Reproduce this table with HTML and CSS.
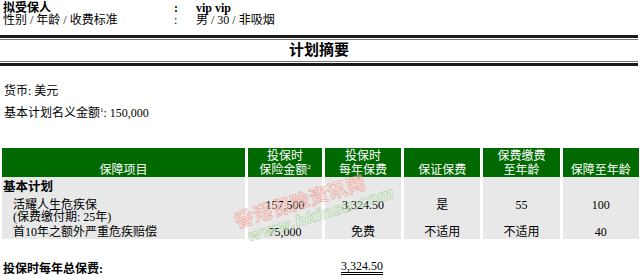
FILE: index.html
```html
<!DOCTYPE html>
<html lang="zh">
<head>
<meta charset="utf-8">
<link rel="stylesheet" href="styles.css">
</head>
<body>
<div class="page">
  <div class="insured">
    <div class="lbl strong">拟受保人</div><div class="colon strong">:</div><div class="val strong">vip vip</div>
    <div class="lbl">性别 / 年龄 / 收费标准</div><div class="colon">:</div><div class="val">男 / 30 / 非吸烟</div>
  </div>

  <div class="rule"><div class="rule-in"><h2 class="title">计划摘要</h2></div></div>

  <p class="line">货币: 美元</p>
  <p class="line">基本计划名义金额<sup class="fn">1</sup>: 150,000</p>

  <table class="plan">
    <colgroup>
      <col class="c1"><col class="c2"><col class="cn"><col class="cn"><col class="cn"><col class="cn">
    </colgroup>
    <thead>
      <tr>
        <th>保障项目</th>
        <th>投保时<br>保险金额<sup class="fn">2</sup></th>
        <th>投保时<br>每年保费</th>
        <th>保证保费</th>
        <th>保费缴费<br>至年龄</th>
        <th>保障至年龄</th>
      </tr>
    </thead>
    <tbody>
      <tr class="r1">
        <td class="name strong">基本计划</td><td></td><td></td><td></td><td></td><td></td>
      </tr>
      <tr class="r2">
        <td class="name sub">活耀人生危疾保<br>(保费缴付期: 25年)</td>
        <td>157,500</td><td>3,324.50</td><td>是</td><td>55</td><td>100</td>
      </tr>
      <tr class="r3">
        <td class="name sub">首10年之额外严重危疾赔偿</td>
        <td>75,000</td><td>免费</td><td>不适用</td><td>不适用</td><td>40</td>
      </tr>
    </tbody>
  </table>

  <div class="total">
    <span class="total-lbl strong">投保时每年总保费:</span>
    <span class="amt">3,324.50</span>
  </div>

  <div class="watermark">
    <div class="wm-cn">香港保险资讯网</div>
    <div class="wm-en">www.hkinsu.com</div>
  </div>
</div>
</body>
</html>
```
FILE: styles.css
```css
html, body {
  margin: 0;
  padding: 0;
  background: #fff;
}
body {
  font-family: "Liberation Serif", "Noto Sans CJK SC", serif;
  font-size: 12px;
  color: #000;
}
.page {
  position: relative;
  width: 641px;
  height: 280px;
  overflow: hidden;
  padding-top: 2px;
  box-sizing: border-box;
}
.strong { font-weight: bold; }

.insured {
  display: grid;
  grid-template-columns: 170px 23px auto;
  line-height: 12px;
  padding-left: 3px;
}
.colon { padding-left: 1px; }

.rule {
  margin-top: 9px;
  width: 638px;
  border-top: 3px solid #1a1a1a;
  border-bottom: 3px solid #1a1a1a;
  padding: 1px 0;
}
.rule-in {
  border-top: 1px solid #777;
  border-bottom: 1px solid #777;
}
.title {
  margin: 0;
  font-size: 15px;
  line-height: 21px;
  font-weight: bold;
  text-align: center;
}

.line {
  margin: 0;
  padding-left: 4px;
  line-height: 16px;
}
.line:first-of-type { margin-top: 17px; }
.line + .line { margin-top: 6px; }
.fn {
  font-size: 7px;
  line-height: 0;
  vertical-align: 5px;
}

.plan {
  margin-top: 27px;
  margin-left: -1px;
  border-collapse: separate;
  border-spacing: 3px 0;
  table-layout: fixed;
  width: 643px;
}
.c1 { width: 242px; }
.c2 { width: 74px; }
.cn { width: 76px; }
.plan th {
  background: #006900;
  color: #fff;
  font-weight: normal;
  height: 29px;
  line-height: 14px;
  padding: 1px 0 0;
  box-sizing: border-box;
  vertical-align: bottom;
  text-align: center;
  overflow: hidden;
}
.plan td {
  background: #e8e8e8;
  text-align: center;
  padding: 0;
  vertical-align: top;
}
.plan td.name { text-align: left; }
.r1 td { height: 20px; line-height: 20px; padding-left: 1px; }
.r1 td.name { font-size: 12.5px; }
.r2 td { height: 28px; line-height: 12px; padding-top: 2px; box-sizing: border-box; }
.r3 td { height: 14px; line-height: 14px; }
.plan td.sub { padding-left: 11px; }

.total {
  display: flex;
  align-items: flex-start;
  margin-top: 22px;
  padding-left: 3px;
}
.total-lbl {
  width: 338px;
  line-height: 14px;
  padding-top: 1px;
}
.amt {
  line-height: 11px;
  border-bottom: 3px double #000;
}

.watermark {
  position: absolute;
  left: 243px;
  top: 208px;
  transform: rotate(-17deg);
  transform-origin: left bottom;
  pointer-events: none;
}
.wm-cn {
  font-family: "Noto Sans CJK SC", sans-serif;
  font-size: 19px;
  line-height: 22px;
  font-weight: bold;
  letter-spacing: 0.5px;
  color: rgba(255, 220, 210, 0.45);
  -webkit-text-stroke: 0.8px rgba(230, 110, 100, 0.45);
}
.wm-en {
  font-family: "DejaVu Sans", sans-serif;
  font-size: 16px;
  line-height: 18px;
  font-style: italic;
  font-weight: bold;
  margin-left: 8px;
  color: rgba(220, 242, 210, 0.5);
  -webkit-text-stroke: 0.7px rgba(130, 190, 120, 0.5);
}
```
